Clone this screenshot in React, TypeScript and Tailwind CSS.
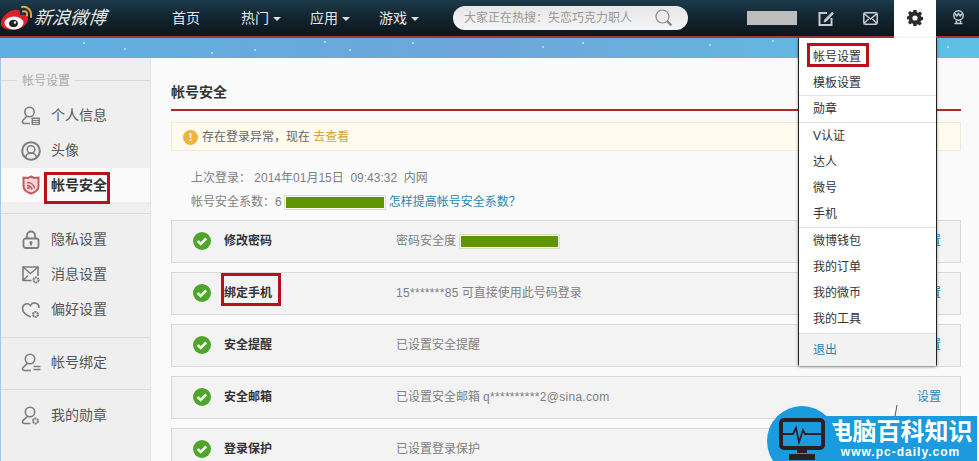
import React from 'react'

const cjk = { fontFamily: '"Liberation Sans", "Noto Sans CJK SC", sans-serif' }

const Caret = () => <span className="ml-1 inline-block border-x-[4px] border-t-[4px] border-x-transparent border-t-[#d8dde0] align-middle" />

const NavItem: React.FC<{ label: string; caret?: boolean; width: string }> = ({ label, caret, width }) => (
  <div className={`${width} text-[14px] text-[#e4e8ea] whitespace-nowrap`}>
    {label}
    {caret && <Caret />}
  </div>
)

const Logo = () => (
  <svg width="34" height="30" viewBox="0 0 34 30" className="shrink-0">
    <path d="M1 20c0-6 7-12 13-13 5-1 7 1 6 5 4-1 8 0 8 4 0 6-8 11-15 11S1 25 1 20z" fill="#d9232b" />
    <ellipse cx="14" cy="20" rx="9.500" ry="6.500" fill="#fff" />
    <ellipse cx="13.500" cy="20.500" rx="4.500" ry="3.800" fill="#222" />
    <circle cx="15" cy="19.500" r="1.200" fill="#fff" />
    <path d="M22 4c5-1 10 3 9 10M23 8.500c3-1 4.500 1 4 4" fill="none" stroke="#e8a33a" strokeWidth="2" strokeLinecap="round" />
  </svg>
)

const Gear = () => (
  <svg width="16" height="16" viewBox="0 0 16 16" className="shrink-0">
    <path
      d="M6.500 0h3l.4 2.200 1.300.6L13 1.500l2 2.100-1.300 1.900.5 1.300L16 7v3l-2 .4-.5 1.300 1.300 1.800-2.100 2-1.800-1.300-1.300.6L9.500 16h-3l-.4-2.200-1.300-.6L3 14.500l-2-2 1.300-1.900-.6-1.300L0 9.500v-3l1.700-.4.6-1.300L1 3l2-2 1.800 1.300 1.300-.6z"
      fill="#2b2b2b"
    />
    <circle cx="8" cy="8" r="2.600" fill="#fff" />
  </svg>
)

const SmallCog: React.FC<{ x: number; y: number }> = ({ x, y }) => (
  <g>
    <circle cx={x} cy={y} r="4.500" fill="#efefef" stroke="none" />
    <circle cx={x} cy={y} r="2.500" fill="none" stroke="#7d7d7d" strokeWidth="2" strokeDasharray="2 0.600" />
  </g>
)

const SideIcon: React.FC<{ kind: string }> = ({ kind }) => {
  const c = '#7d7d7d'
  const p = { fill: 'none', stroke: c, strokeWidth: 1.6 }
  return (
    <svg width="20" height="20" viewBox="0 0 20 20" className="shrink-0">
      {kind === 'info' && (
        <g {...p}>
          <circle cx="8.500" cy="6" r="4.700" />
          <path d="M6 10c-1 2-4 3-4.500 5.500 0 1.500 1 2 2 2H9" />
          <rect x="10.500" y="11.500" width="8.500" height="7.500" rx="1" fill="#7d7d7d" stroke="none" />
          <path d="M12 13.500h5.500M12 15.500h5.500M12 17.500h5.500" stroke="#efefef" strokeWidth="0.900" />
        </g>
      )}
      {kind === 'avatar' && (
        <g {...p} strokeWidth={2}>
          <circle cx="10" cy="10" r="8.800" />
          <circle cx="10" cy="8.500" r="3.800" strokeWidth="1.500" />
          <path d="M4.500 16c1-3 3-4 5.500-4s4.500 1 5.500 4" strokeWidth="1.500" />
        </g>
      )}
      {kind === 'safe' && (
        <g>
          <path d="M10 1.500l3 1.500 4.500-.5V11c0 4-4 6.500-7.500 7.500C6.500 17.500 2.500 15 2.500 11V2.500L7 3z" fill="#f2d9d9" stroke="#c9565a" strokeWidth="2" />
          <path d="M6 7.500c4 0 7 2.500 7.500 6M6 10.500c2.500 0 4.500 1.500 5 4" fill="none" stroke="#c9565a" strokeWidth="1.500" />
          <circle cx="7.500" cy="13" r="1.300" fill="#c9565a" />
        </g>
      )}
      {kind === 'lock' && (
        <g {...p} strokeWidth={1.800}>
          <path d="M6 8.500V5.500a4 4 0 0 1 8 0V8.500" />
          <rect x="2.500" y="8.500" width="15" height="9.500" rx="2" />
          <circle cx="10" cy="12.500" r="1.600" fill={c} stroke="none" />
          <path d="M10 13v2.500" />
        </g>
      )}
      {kind === 'msg' && (
        <g {...p}>
          <path d="M11 15.500H2V2h15v9" />
          <path d="M2 2l7.500 6.500L17 2M2 15.500l5-5" />
          <SmallCog x={15} y={15} />
        </g>
      )}
      {kind === 'like' && (
        <g {...p}>
          <path d="M10 17C4.500 15 1.500 12 1.500 8a4.500 4.500 0 0 1 8-2.500A4.500 4.500 0 0 1 18 8" />
          <SmallCog x={14.500} y={14.500} />
        </g>
      )}
      {kind === 'bind' && (
        <g {...p}>
          <circle cx="9" cy="6" r="4.700" />
          <path d="M6.500 10c-1 2-4.500 3.500-5 5.500 0 1.500 1 2 2 2h6.500" />
          <path d="M12.500 13.500h7M12.500 16.500h7" />
        </g>
      )}
      {kind === 'medal' && (
        <g {...p}>
          <circle cx="9" cy="6" r="4.700" />
          <path d="M6.500 10c-1 2-4.500 3.500-5 5.500 0 1.500 1 2 2 2h6" />
          <SmallCog x={14.500} y={15} />
        </g>
      )}
    </svg>
  )
}

const SideItem: React.FC<{ icon: string; label: string }> = ({ icon, label }) => (
  <div className="flex h-[35px] items-center gap-[10px] pl-[20px] text-[14px] text-[#555]">
    <SideIcon kind={icon} />
    {label}
  </div>
)

const Check = () => (
  <svg width="18" height="18" viewBox="0 0 18 18" className="shrink-0">
    <circle cx="9" cy="9" r="9" fill="#4fa52c" />
    <path d="M4.500 9l3.200 3 5.500-5.500" fill="none" stroke="#e8f5df" strokeWidth="2.600" />
  </svg>
)

const Bar: React.FC<{ width: string }> = ({ width }) => (
  <span className={`${width} inline-block h-[15px] border border-[#d6e2bf] bg-[#5f9600] shadow-[inset_0_0_0_1px_#fff]`} />
)

const Row: React.FC<{ title: string; link?: boolean; boxed?: boolean; children: React.ReactNode }> = ({ title, link, boxed, children }) => (
  <div className="flex h-[43px] shrink-0 items-center border border-[#d9d9d9] bg-[#f3f3f3] pb-[1px] pl-[21px] pr-[19px] text-[12px]">
    <Check />
    <div className="relative ml-[13px] w-[172px] font-bold text-[#333]">
      {title}
      {boxed && <span className="absolute left-[-3px] top-[-11px] h-[33px] w-[60px] border-[3px] border-[#b5121b]" />}
    </div>
    <div className="flex flex-1 items-center gap-[3px] text-[#808080]">{children}</div>
    {link && <a className="text-[#2a86b3]">设置</a>}
  </div>
)

const MenuItem: React.FC<{ label: string; boxed?: boolean }> = ({ label, boxed }) => (
  <div className="relative flex h-[26px] items-center pl-[14px] text-[12px] text-[#333]">
    {label}
    {boxed && <span className="absolute left-[8px] top-[-1px] h-[24px] w-[62px] border-[3px] border-[#b5121b]" />}
  </div>
)

const stars = [
  [84, 5], [125, 11], [212, 15], [255, 12], [325, 4], [350, 12], [413, 5],
  [543, 9], [583, 5], [710, 7], [773, 3], [948, 9],
]

export default function App() {
  return (
    <div style={cjk} className="relative h-[461px] w-[979px] overflow-hidden bg-[#fafafa]">
      {/* top bar */}
      <header className="relative flex h-[38px] items-center border-b-2 border-[#a8343c] bg-gradient-to-b from-[#1d3a4b] via-[#12242f] to-[#0d161c]">
        <div className="flex w-[172px] items-center">
          <Logo />
          <span className="-skew-x-6 text-[18px] italic text-[#e8e8e8]">新浪微博</span>
        </div>
        <NavItem label="首页" width="w-[69px]" />
        <NavItem label="热门" caret width="w-[69px]" />
        <NavItem label="应用" caret width="w-[69px]" />
        <NavItem label="游戏" caret width="w-[74px]" />
        <div className="flex h-[24px] w-[235px] items-center justify-between rounded-full bg-gradient-to-b from-[#e6e6e6] to-[#f6f6f6] pl-[11px] pr-[15px] text-[12px] text-[#9a9a9a]">
          大家正在热搜：失恋巧克力职人
          <svg width="18" height="18" viewBox="0 0 18 18" fill="none" stroke="#8a8a8a" strokeWidth="1.200">
            <circle cx="7.500" cy="7.500" r="6.500" />
            <path d="M12 12l4.500 4.500" strokeWidth="2.400" />
          </svg>
        </div>
        <div className="ml-[59px] h-[14px] w-[50px] bg-[#bdbdbd]" />
        <svg width="16" height="15" viewBox="0 0 16 15" fill="none" stroke="#c6ccd0" strokeWidth="2" className="ml-[21px]">
          <path d="M9 2H1.500v12h12V7" />
          <path d="M14.500 1L7 8.500l-1 2.500 2.500-1L15.500 2.500" fill="#c6ccd0" strokeWidth="1" />
        </svg>
        <svg width="15" height="13" viewBox="0 0 15 13" fill="none" stroke="#c6ccd0" strokeWidth="1.500" className="ml-[29px]">
          <rect x="0.800" y="0.800" width="13.400" height="11.400" rx="1.500" />
          <path d="M1 1.500l6.500 5.500L14 1.500M1 11.500l4.500-4.500M14 11.500L9.500 7" />
        </svg>
        <div className="absolute left-[894px] top-0 flex h-[40px] w-[42px] items-center justify-center bg-white pb-[4px]">
          <Gear />
        </div>
        <svg width="15" height="15" viewBox="0 0 15 15" fill="none" stroke="#c6ccd0" strokeWidth="1.500" className="absolute left-[951px] top-[10px]">
          <circle cx="7.500" cy="5.500" r="4.700" />
          <path d="M4 3.500l1.800 2.500 1.700-2.500 1.700 2.500L11 3.500M3.500 13.500h8M5.500 10.500v3M9.500 10.500v3" />
        </svg>
      </header>

      {/* blue band */}
      <div className="relative h-[20px] bg-gradient-to-r from-[#5fafe0] via-[#6da6da] to-[#5fc0e6]">
        <svg width="979" height="20" className="absolute inset-0">
          {stars.map(([x, y]) => (
            <circle key={x} cx={x} cy={y} r="1" fill="#c4e4f6" />
          ))}
        </svg>
      </div>

      <main className="flex h-[403px] border-l border-[#9fcbe6]">
        <aside className="w-[150px] shrink-0 border-r border-[#e4e4e4] bg-[#efefef]">
          <div className="flex h-[40px] items-center pt-[5px] text-[12px] text-[#aaa]">
            <span className="h-px w-[16px] bg-[#d9d9d9]" />
            <span className="px-[5px]">帐号设置</span>
            <span className="h-px flex-1 bg-[#d9d9d9]" />
          </div>
          <SideItem icon="info" label="个人信息" />
          <SideItem icon="avatar" label="头像" />
          <div className="flex h-[34px] items-center gap-[10px] bg-[#fafafa] pl-[20px] text-[14px] font-bold text-[#333]">
            <SideIcon kind="safe" />
            <span className="relative">
              帐号安全
              <span className="absolute left-[-7px] top-[-3px] h-[32px] w-[66px] border-[3px] border-[#b5121b]" />
            </span>
          </div>
          <div className="mt-[11px] h-[9px] border-t border-[#dcdcdc]" />
          <SideItem icon="lock" label="隐私设置" />
          <SideItem icon="msg" label="消息设置" />
          <SideItem icon="like" label="偏好设置" />
          <div className="mt-[10px] h-[8px] border-t border-[#dcdcdc]" />
          <SideItem icon="bind" label="帐号绑定" />
          <div className="mt-[9px] h-[9px] border-t border-[#dcdcdc]" />
          <SideItem icon="medal" label="我的勋章" />
        </aside>

        <section className="flex w-[810px] flex-col pl-[20px]">
          <h2 className="flex h-[53px] shrink-0 items-center border-b-2 border-[#b3272f] pt-[18px] text-[14px] font-bold text-[#333]">帐号安全</h2>
          <div className="mt-[11px] flex h-[29px] shrink-0 items-center border border-[#f5ecd0] bg-[#fffbee] pl-[11px] pt-[1px] text-[12px] text-[#666]">
            <span className="mr-[4px] flex h-[15px] w-[15px] items-center justify-center rounded-full bg-[#f2b33d] text-[11px] font-bold text-white">!</span>
            存在登录异常，现在&nbsp;<span className="text-[#d8a13a]">去查看</span>
          </div>
          <div className="mt-[15px] flex h-[24px] shrink-0 items-center pl-[20px] text-[12px] text-[#808080]">
            上次登录： 2014年01月15日&nbsp;&nbsp;09:43:32&nbsp;&nbsp;内网
          </div>
          <div className="flex h-[24px] shrink-0 items-center gap-[2px] pl-[20px] text-[12px] text-[#808080]">
            帐号安全系数：6
            <Bar width="w-[102px]" />
            <span className="ml-[1px] text-[#2a86b3]">怎样提高帐号安全系数？</span>
          </div>
          <div className="mt-[6px] flex flex-col gap-[9px]">
            <Row title="修改密码" link>
              密码安全度
              <Bar width="w-[101px]" />
            </Row>
            <Row title="绑定手机" link boxed>
              <span className="tracking-[0.3px]">15*******85</span> 可直接使用此号码登录
            </Row>
            <Row title="安全提醒" link>
              已设置安全提醒
            </Row>
            <Row title="安全邮箱" link>
              已设置安全邮箱 <span className="tracking-[0.3px]">q**********2@sina.com</span>
            </Row>
            <Row title="登录保护">已设置登录保护</Row>
          </div>
        </section>
      </main>

      {/* settings menu */}
      <div className="absolute left-[798px] top-[38px] h-[328px] w-[139px] rounded-b-[2px] border border-t-0 border-[#222] bg-white pt-[6px] shadow-[0_1px_3px_rgba(0,0,0,0.4)]">
        <MenuItem label="帐号设置" boxed />
        <MenuItem label="模板设置" />
        <div className="mt-[-1px] border-t border-[#e2e2e2]" />
        <MenuItem label="勋章" />
        <div className="border-t border-[#e2e2e2]" />
        <MenuItem label="V认证" />
        <MenuItem label="达人" />
        <MenuItem label="微号" />
        <MenuItem label="手机" />
        <div className="border-t border-[#e2e2e2]" />
        <MenuItem label="微博钱包" />
        <MenuItem label="我的订单" />
        <MenuItem label="我的微币" />
        <MenuItem label="我的工具" />
        <div className="mt-[1px] flex h-[33px] items-center border-t border-[#e2e2e2] bg-[#f2f2f2] pl-[14px] text-[12px] text-[#2a86b3]">退出</div>
      </div>

      {/* watermark */}
      <div className="absolute left-[820px] top-[416px] flex h-[45px] w-[157px] flex-col items-center justify-center bg-[#1b9ade] pl-[4px]">
        <div className="text-[24px] font-bold leading-[27px] text-white whitespace-nowrap">电脑百科知识</div>
        <div className="text-[12px] font-bold leading-[14px] tracking-[1px] text-white whitespace-nowrap">www.pc-daily.com</div>
      </div>
      <div className="absolute left-[767px] top-[406px] flex h-[70px] w-[70px] items-start justify-center rounded-full bg-[#1b9ade] pt-[12px]">
        <svg width="46" height="42" viewBox="0 0 46 42" fill="none">
          <rect x="2" y="2" width="42" height="28" rx="3" fill="#1b9ade" stroke="#2a2020" strokeWidth="4" />
          <path d="M4 16h10l3-6 3 14 4-12 2 4h16" stroke="#2a2020" strokeWidth="1.800" />
          <path d="M18 30h10v5H18zM10 36h26v6H10z" fill="#2a2020" />
        </svg>
      </div>
      <svg width="8" height="12" viewBox="0 0 8 12" className="absolute left-[890px] top-[405px]">
        <rect x="0" y="3" width="6" height="7" fill="#fff" />
        <path d="M7 0L5 11" stroke="#555" strokeWidth="1" />
      </svg>
    </div>
  )
}
